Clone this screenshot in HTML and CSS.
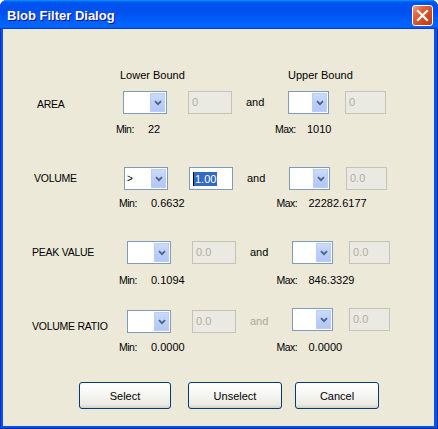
FILE: index.html
```html
<!DOCTYPE html>
<html>
<head>
<meta charset="utf-8">
<title>Blob Filter Dialog</title>
<link rel="stylesheet" href="styles.css">
</head>
<body>
<div class="window">
  <div class="titlebar">
    <span class="title">Blob Filter Dialog</span>
    <span class="close"><svg width="13" height="13" viewBox="0 0 13 13"><path d="M2 2 L11 11 M11 2 L2 11" stroke="#fff" stroke-width="2.2" stroke-linecap="square"/></svg></span>
  </div>
  <div class="client">
    <div class="header">
      <span class="hdr hdr-lower">Lower Bound</span>
      <span class="hdr">Upper Bound</span>
    </div>

    <div class="row row-area">
      <span class="label">AREA</span>
      <span class="combo"><span class="combo-val"></span><span class="combo-btn"><svg width="8" height="6" viewBox="0 0 8 6"><path d="M1 1.2 L4 4.2 L7 1.2" fill="none" stroke="#4d6185" stroke-width="1.8"/></svg></span></span>
      <span class="field disabled">0</span>
      <span class="and">and</span>
      <span class="combo upper"><span class="combo-val"></span><span class="combo-btn"><svg width="8" height="6" viewBox="0 0 8 6"><path d="M1 1.2 L4 4.2 L7 1.2" fill="none" stroke="#4d6185" stroke-width="1.8"/></svg></span></span>
      <span class="field disabled upper">0</span>
    </div>
    <div class="stats stats-area">
      <span class="stat"><span class="key">Min:</span><span>22</span></span>
      <span class="stat"><span class="key">Max:</span><span>1010</span></span>
    </div>

    <div class="row row-volume">
      <span class="label">VOLUME</span>
      <span class="combo"><span class="combo-val">&gt;</span><span class="combo-btn"><svg width="8" height="6" viewBox="0 0 8 6"><path d="M1 1.2 L4 4.2 L7 1.2" fill="none" stroke="#4d6185" stroke-width="1.8"/></svg></span></span>
      <span class="field"><span class="sel">1.00</span></span>
      <span class="and">and</span>
      <span class="combo upper"><span class="combo-val"></span><span class="combo-btn"><svg width="8" height="6" viewBox="0 0 8 6"><path d="M1 1.2 L4 4.2 L7 1.2" fill="none" stroke="#4d6185" stroke-width="1.8"/></svg></span></span>
      <span class="field disabled upper">0.0</span>
    </div>
    <div class="stats stats-volume">
      <span class="stat"><span class="key">Min:</span><span>0.6632</span></span>
      <span class="stat"><span class="key">Max:</span><span>22282.6177</span></span>
    </div>

    <div class="row row-peak">
      <span class="label">PEAK VALUE</span>
      <span class="combo"><span class="combo-val"></span><span class="combo-btn"><svg width="8" height="6" viewBox="0 0 8 6"><path d="M1 1.2 L4 4.2 L7 1.2" fill="none" stroke="#4d6185" stroke-width="1.8"/></svg></span></span>
      <span class="field disabled">0.0</span>
      <span class="and">and</span>
      <span class="combo upper"><span class="combo-val"></span><span class="combo-btn"><svg width="8" height="6" viewBox="0 0 8 6"><path d="M1 1.2 L4 4.2 L7 1.2" fill="none" stroke="#4d6185" stroke-width="1.8"/></svg></span></span>
      <span class="field disabled upper">0.0</span>
    </div>
    <div class="stats stats-peak">
      <span class="stat"><span class="key">Min:</span><span>0.1094</span></span>
      <span class="stat"><span class="key">Max:</span><span>846.3329</span></span>
    </div>

    <div class="row row-ratio">
      <span class="label">VOLUME RATIO</span>
      <span class="combo"><span class="combo-val"></span><span class="combo-btn"><svg width="8" height="6" viewBox="0 0 8 6"><path d="M1 1.2 L4 4.2 L7 1.2" fill="none" stroke="#4d6185" stroke-width="1.8"/></svg></span></span>
      <span class="field disabled">0.0</span>
      <span class="and and-disabled">and</span>
      <span class="combo upper shift-up"><span class="combo-val"></span><span class="combo-btn"><svg width="8" height="6" viewBox="0 0 8 6"><path d="M1 1.2 L4 4.2 L7 1.2" fill="none" stroke="#4d6185" stroke-width="1.8"/></svg></span></span>
      <span class="field disabled upper shift-up">0.0</span>
    </div>
    <div class="stats stats-ratio">
      <span class="stat"><span class="key">Min:</span><span>0.0000</span></span>
      <span class="stat"><span class="key">Max:</span><span>0.0000</span></span>
    </div>

    <div class="buttons">
      <span class="btn btn-select">Select</span>
      <span class="btn btn-unselect">Unselect</span>
      <span class="btn btn-cancel">Cancel</span>
    </div>
  </div>
</div>
</body>
</html>
```
FILE: styles.css
```css
body {
  margin: 0;
  font-family: "Liberation Sans", Arial, sans-serif;
  font-size: 11px;
  color: #000;
  background: #fff;
}

.window {
  width: 438px;
  height: 429px;
  box-sizing: border-box;
  display: flex;
  flex-direction: column;
  background: #0b52e3;
  border-radius: 7px 7px 0 0;
  overflow: hidden;
  box-shadow: inset 1px 0 #0831d9, inset -1px 0 #0029b8, inset 0 -1px #0029b8;
}

.titlebar {
  height: 29px;
  flex: none;
  display: flex;
  align-items: center;
  justify-content: space-between;
  padding: 0 5px 0 7px;
  box-sizing: border-box;
  background: linear-gradient(180deg, #0997ff, #0053ee 8%, #0050ee 40%, #0066ff 88%, #0066ff 93%, #005bff 95%, #003dd7 96%, #003dd7);
}

.title {
  color: #fff;
  font-weight: bold;
  font-size: 13px;
  line-height: 15px;
  margin-top: 2px;
  text-shadow: 1px 1px #0f1089;
}

.close {
  width: 21px;
  height: 21px;
  box-sizing: border-box;
  border: 1px solid #fff;
  border-radius: 3px;
  margin-top: 2px;
  display: flex;
  align-items: center;
  justify-content: center;
  background: linear-gradient(135deg, #eba28a 0%, #e0663f 30%, #d14a1e 65%, #c13b10 100%);
}

.client {
  flex: 1;
  margin: 0 4px 3px 3px;
  background: #ece9d8;
  padding-top: 40px;
  display: flex;
  flex-direction: column;
}

.header {
  display: flex;
  padding-left: 117px;
  line-height: 13px;
}

.hdr-lower {
  width: 168px;
}

.row {
  display: flex;
  align-items: center;
  height: 23px;
}

.label {
  font-size: 10.5px;
  letter-spacing: -0.25px;
  line-height: 13px;
}

.row-area { padding-left: 34px; margin-top: 9px; }
.row-area .label { width: 86px; margin-top: 3px; }
.row-volume { padding-left: 31px; margin-top: 31px; }
.row-volume .label { width: 90px; }
.row-peak { padding-left: 29px; margin-top: 31px; }
.row-peak .label { width: 95px; }
.row-ratio { padding-left: 29px; margin-top: 23px; }
.row-ratio .label { width: 95px; margin-top: 10px; }

.combo {
  width: 44px;
  height: 23px;
  box-sizing: border-box;
  border: 1px solid #7f9db9;
  background: #fff;
  padding: 1px;
  display: flex;
}

.combo.upper {
  width: 41px;
}

.combo-val {
  flex: 1;
  padding-left: 1px;
  line-height: 19px;
  font-size: 10px;
}

.combo-btn {
  width: 15px;
  border-radius: 1px;
  background: linear-gradient(180deg, #cddcfd 0%, #bccffa 50%, #b1c6f7 100%);
  box-shadow: inset 0 0 0 1px #bccdf4;
  display: flex;
  align-items: center;
  justify-content: center;
}

.field {
  width: 44px;
  height: 23px;
  box-sizing: border-box;
  border: 1px solid #7f9db9;
  background: #fff;
  padding: 0 3px;
  margin-left: 21px;
  line-height: 21px;
  display: flex;
  align-items: center;
}

.field.upper {
  width: 41px;
  margin-left: 16px;
}

.field.disabled {
  border-color: #c5c3b7;
  background: #ebeae2;
  color: #b0ad9f;
}

.sel {
  background: #316ac5;
  color: #fff;
  line-height: 14px;
  padding: 0 1px;
  border-left: 1px solid #000;
}

.and {
  width: 42px;
  margin-left: 14px;
  line-height: 13px;
}

.and-disabled {
  color: #aca899;
}

.shift-up {
  margin-top: -4px;
}

.stats {
  display: flex;
  line-height: 13px;
  padding-left: 116px;
}

.stat {
  width: 165px;
  display: flex;
}

.key {
  width: 32px;
  font-size: 10.5px;
  letter-spacing: -0.5px;
}

.stats-area { padding-left: 113px; margin-top: 9px; }
.stats-volume { margin-top: 7px; }
.stats-peak { margin-top: 10px; }
.stats-ratio { margin-top: 8px; }

.buttons {
  display: flex;
  padding-left: 76px;
  margin-top: 28px;
}

.btn {
  height: 27px;
  box-sizing: border-box;
  border: 1px solid #003c74;
  border-radius: 3px;
  background: linear-gradient(180deg, #ffffff 0%, #f7f7f4 40%, #ecebe6 85%, #d6d0c5 100%);
  display: flex;
  align-items: center;
  justify-content: center;
}

.btn-select { width: 92px; }
.btn-unselect { width: 94px; margin-left: 17px; }
.btn-cancel { width: 84px; margin-left: 13px; }
```
